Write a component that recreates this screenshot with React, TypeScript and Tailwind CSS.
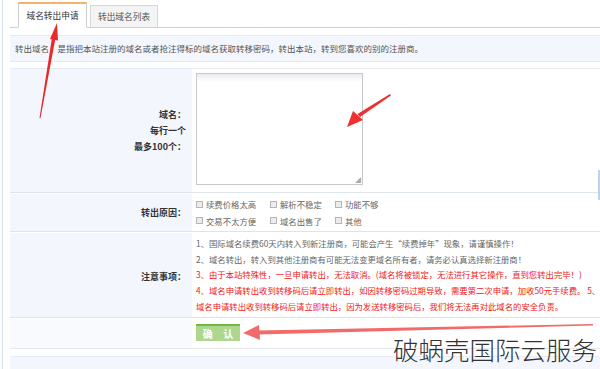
import React from 'react'

const reasons = [
  ['续费价格太高', '解析不稳定', '功能不够'],
  ['交易不太方便', '域名出售了', '其他'],
]

const notes: { text: string; red: boolean }[] = [
  { text: '1、国际域名续费60天内转入到新注册商，可能会产生“续费掉年”现象，请谨慎操作！', red: false },
  { text: '2、域名转出，转入到其他注册商有可能无法变更域名所有者，请务必认真选择新注册商！', red: false },
  { text: '3、由于本站特殊性，一旦申请转出，无法取消。(域名将被锁定，无法进行其它操作，直到您转出完毕！)', red: true },
  { text: '4、域名申请转出收到转移码后请立即转出，如因转移密码过期导致，需要第二次申请，加收50元手续费。 5、', red: true },
  { text: '域名申请转出收到转移码后请立即转出，因为发送转移密码后，我们将无法再对此域名的安全负责。', red: true },
]

function Checkbox({ label }: { label: string }) {
  return (
    <label className="flex items-center gap-[3px] text-[8.4px] text-[#666] leading-none">
      <span className="w-[7px] h-[7px] border border-[#b5b5b5] bg-[#ececec] inline-block" />
      {label}
    </label>
  )
}

function Arrows() {
  return (
    <svg className="absolute inset-0 pointer-events-none" width="600" height="369" viewBox="0 0 600 369">
      {/* arrow to tab */}
      <polygon points="39.5,118 40.5,118 55.5,38 52,37.5" fill="#ea2a2a" />
      <polygon points="57,23 50,39 58,40.5" fill="#ea2a2a" />
      {/* arrow to textarea */}
      <polygon points="390,94 391,95.5 360,117 357.5,114" fill="#ee3030" />
      <polygon points="347,127 353,111 363,120" fill="#ee3030" />
      {/* arrow to button */}
      <polygon points="593,324 593,325.5 258,334.5 258,330.5" fill="#f26a6a" />
      <polygon points="243,333 259,325 260,340" fill="#f26a6a" />
    </svg>
  )
}

export default function App() {
  return (
    <div
      className="relative w-[600px] h-[369px] overflow-hidden bg-white pl-[2px]"
      style={{ fontFamily: '"Noto Sans CJK SC", "Noto Sans", sans-serif' }}
    >
      <div className="h-full border-l border-[#d3e1f2] pl-[7px]">
        {/* tabs */}
        <div className="h-[28px] flex items-end gap-[3px] pl-[8px] border-b border-[#cfcfcf]">
          <div className="w-[69px] h-[26px] -mb-px bg-white border border-[#cfcfcf] border-t-2 border-t-[#f3b36a] border-b-white flex items-center justify-center text-[8.7px] text-[#333]">
            域名转出申请
          </div>
          <div className="w-[68px] h-[22px] bg-[#f4f4f4] border border-[#d6d6d6] border-b-0 flex items-center justify-center text-[8.7px] text-[#555]">
            转出域名列表
          </div>
        </div>

        {/* info */}
        <div className="mt-[7px] h-[27px] bg-[#f3f6fc] border-y border-[#e4eaf3] px-[5px] flex items-center text-[8.5px] text-[#555] whitespace-nowrap">
          转出域名，是指把本站注册的域名或者抢注得标的域名获取转移密码，转出本站，转到您喜欢的别的注册商。
        </div>

        {/* form table */}
        <div className="mt-[6px] border-t border-[#e6ebf2]">
          <div className="flex h-[124px] border-b border-[#dde4ed]">
            <div className="w-[182px] shrink-0 bg-[#f3f6fc] flex flex-col items-end justify-center pr-[6px] text-[9px] font-bold text-[#333] leading-[16px]">
              <span>域名：</span>
              <span>每行一个</span>
              <span>最多100个：</span>
            </div>
            <div className="flex-1 min-w-0 pl-[4px] pt-[4px]">
              <div className="relative w-[167px] h-[112px] border border-[#c8c8c8] bg-gradient-to-b from-[#ececec] to-white to-[8px]">
                <span className="absolute right-[1px] bottom-[1px] text-[6px] leading-none text-[#aaa]">◢</span>
              </div>
            </div>
          </div>

          <div className="flex h-[39px] border-t border-t-white border-b border-[#dde4ed]">
            <div className="w-[182px] shrink-0 bg-[#f3f6fc] flex items-center justify-end pr-[6px] text-[9px] font-bold text-[#333]">
              转出原因：
            </div>
            <div className="flex-1 min-w-0 pl-[4px] flex flex-col justify-center gap-[8px]">
              {reasons.map((row, i) => (
                <div key={i} className="grid grid-cols-[74px_65px_60px]">
                  {row.map((r) => (
                    <Checkbox key={r} label={r} />
                  ))}
                </div>
              ))}
            </div>
          </div>

          <div className="flex h-[86px] border-t border-t-white border-b border-[#dde4ed]">
            <div className="w-[182px] shrink-0 bg-[#f3f6fc] flex items-center justify-end pr-[6px] pt-[3px] text-[9px] font-bold text-[#333]">
              注意事项：
            </div>
            <div className="flex-1 min-w-0 pl-[4px] pt-[3px] text-[8.35px] leading-[15.7px] whitespace-nowrap">
              {notes.map((n, i) => (
                <div key={i} className={n.red ? 'text-[#f01818]' : 'text-[#666]'}>
                  {n.text}
                </div>
              ))}
            </div>
          </div>

          <div className="flex h-[31px] border-t border-t-white border-b border-[#e4e9f0]">
            <div className="w-[182px] shrink-0 bg-[#f8fafd]" />
            <div className="flex-1 min-w-0 pl-[4px] pt-[5px]">
              <button className="w-[44px] h-[17px] bg-[#add78f] border-t-2 border-[#72b843] text-white text-[10px] font-bold tracking-[4px] pl-[4px] flex items-center justify-center">
                确 认
              </button>
            </div>
          </div>
        </div>

        <div className="mt-[7px] h-[20px] bg-[#f3f6fc] border-t border-[#e8edf4]" />
      </div>

      <div className="absolute right-0 top-[170px] w-[2px] h-[30px] bg-[#bcd3ea]" />

      <Arrows />

      <div className="absolute left-[393px] top-[333px] text-[25.5px] leading-[32px] font-light text-[#333] whitespace-nowrap">
        破蜗壳国际云服务
      </div>
    </div>
  )
}
